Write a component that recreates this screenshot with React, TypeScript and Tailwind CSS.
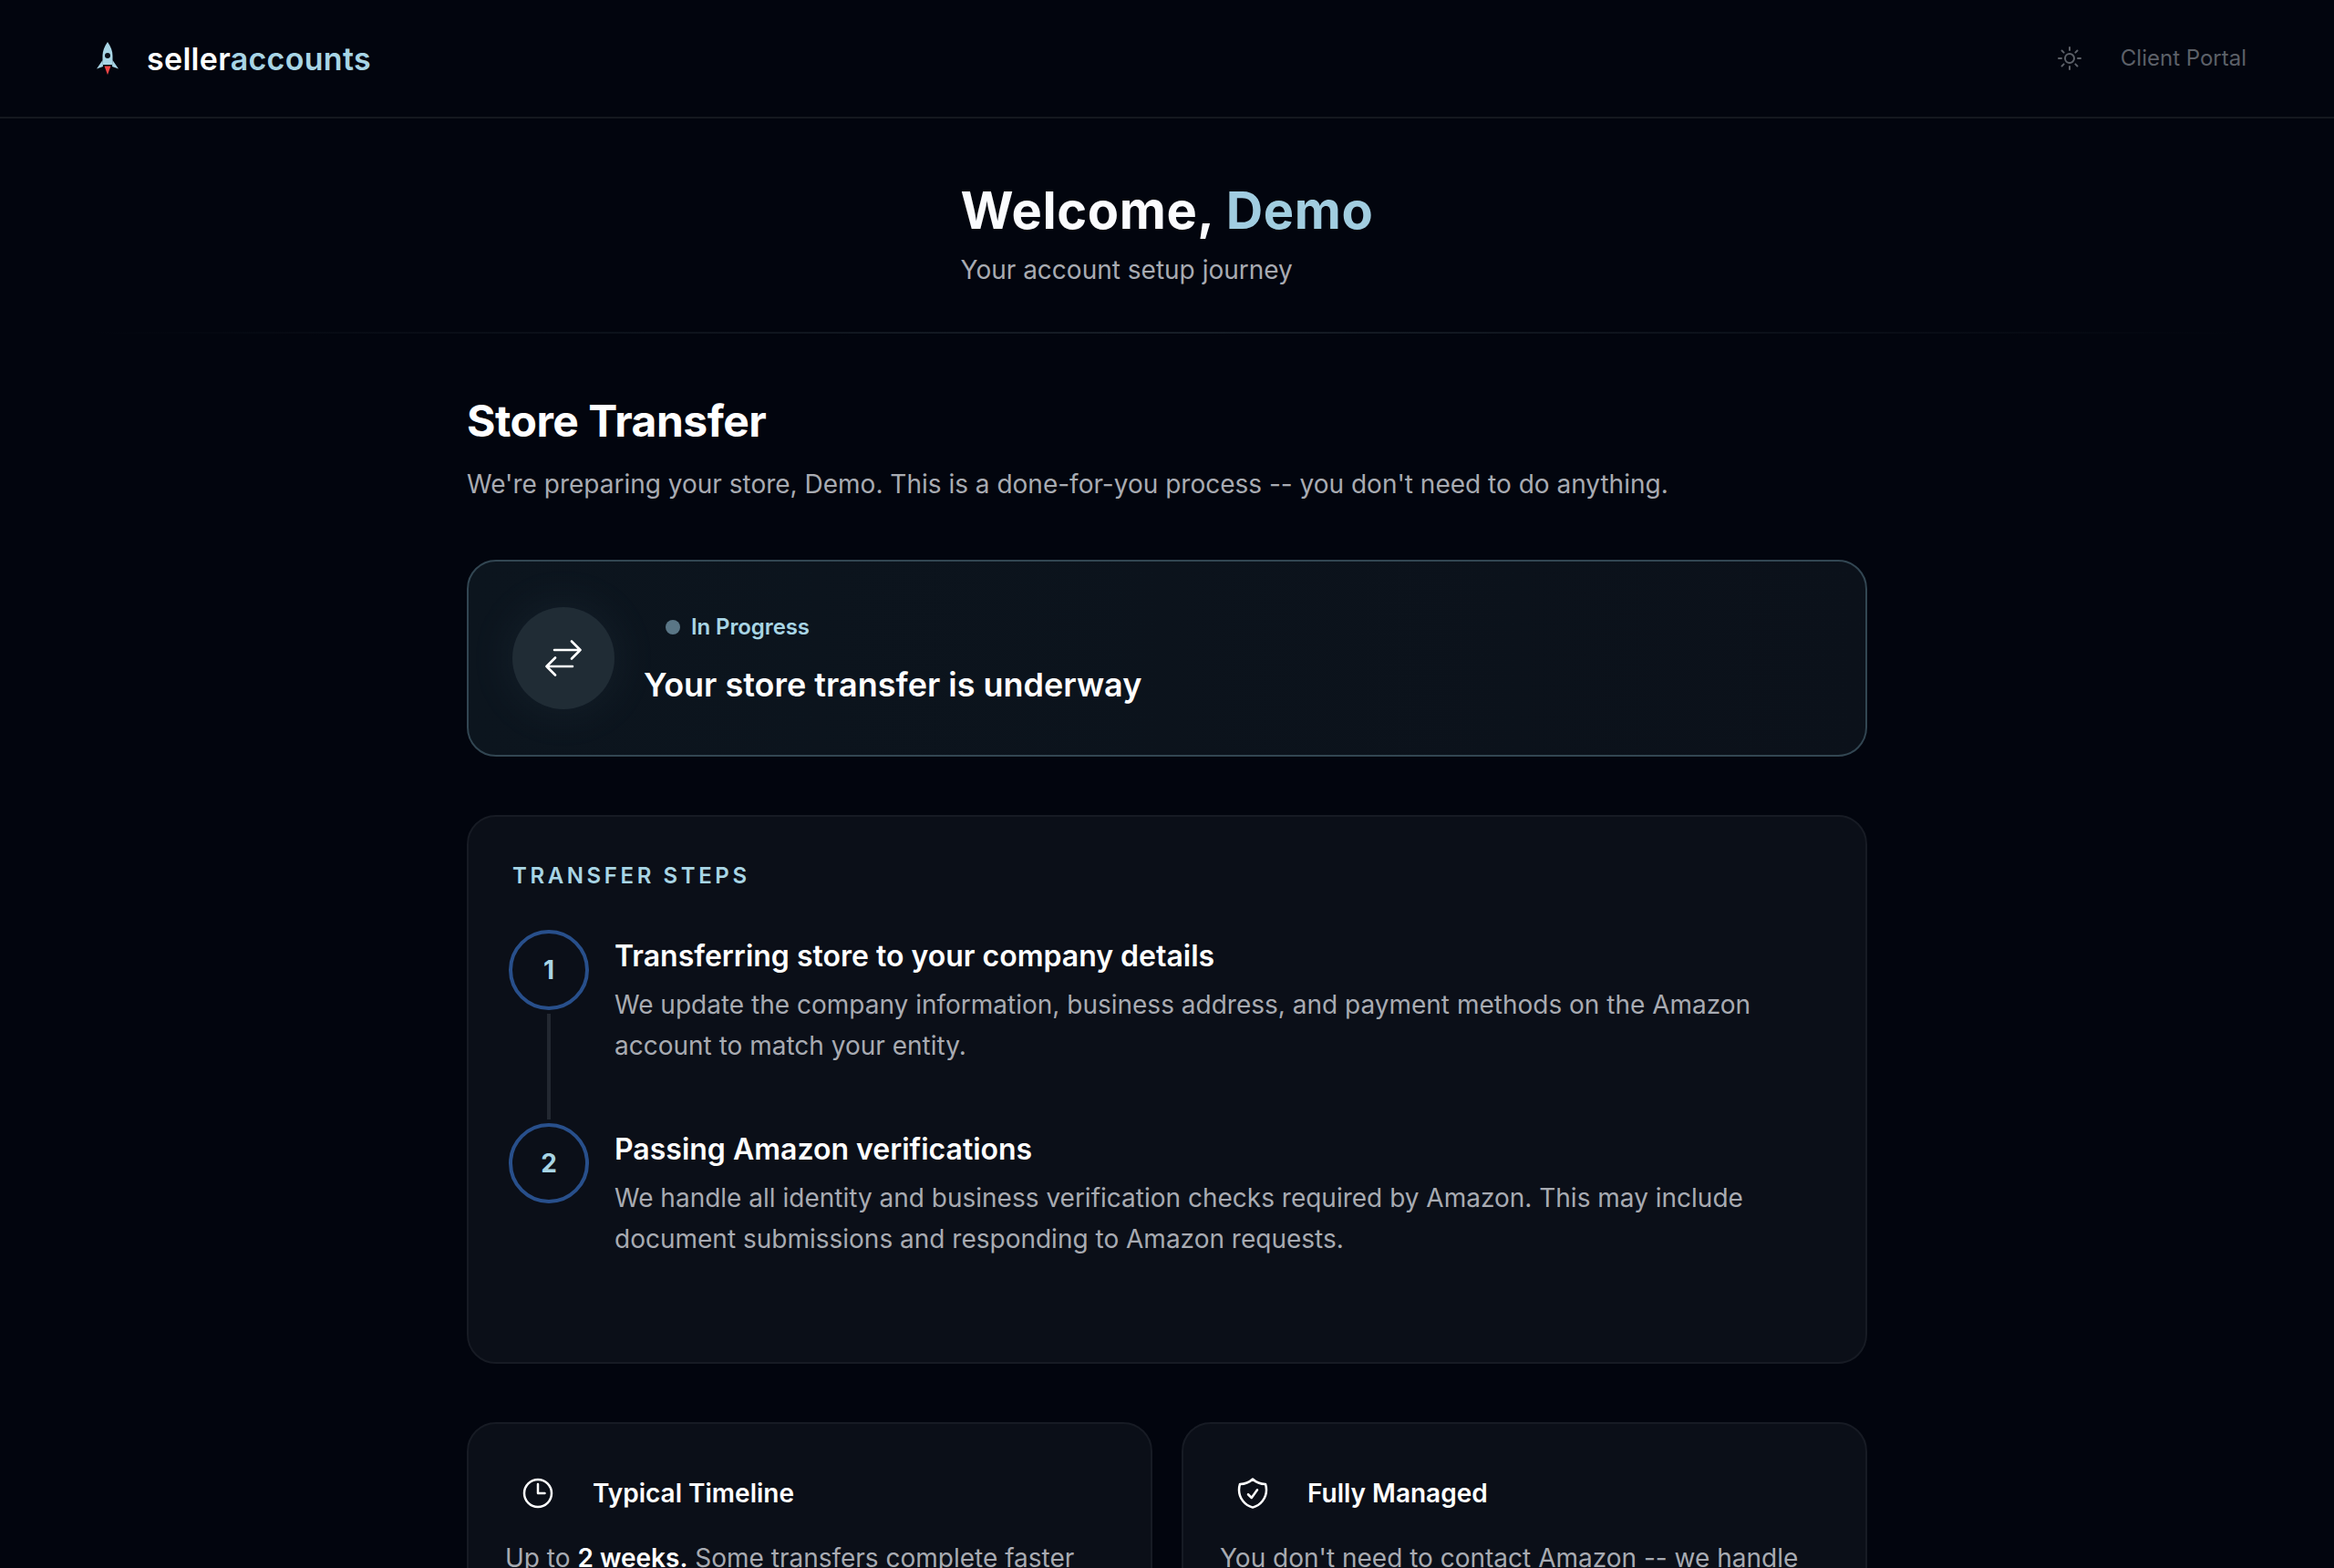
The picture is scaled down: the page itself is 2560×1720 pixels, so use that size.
import React from 'react';

const RocketLogo = () => (
  <svg width="26" height="36" viewBox="0 0 26 36" className="shrink-0">
    <path d="M13 0C9.5 5 7.5 10 7.5 15v10h11V15c0-5-2-10-5.500-15z" fill="#a8d5e5" />
    <path d="M7.500 20L1 29.500 8 27zM18.500 20L25 29.500 18 27z" fill="#a8d5e5" />
    <path d="M9.500 26.500h7L13 36z" fill="#ef4444" />
    <circle cx="13" cy="15" r="3" fill="#0a0f18" />
  </svg>
);

const Icon = ({ size, d }: { size: number; d: string }) => (
  <svg
    width={size}
    height={size}
    viewBox="0 0 24 24"
    fill="none"
    stroke="currentColor"
    strokeWidth={1.5}
    strokeLinecap="round"
    strokeLinejoin="round"
    className="shrink-0"
  >
    <path d={d} />
  </svg>
);

const sunPath =
  'M12 3v2.250m6.364.386-1.591 1.591M21 12h-2.250m-.386 6.364-1.591-1.591M12 18.750V21m-4.773-4.227-1.591 1.591M5.250 12H3m4.227-4.773L5.636 5.636M15.750 12a3.750 3.750 0 1 1-7.500 0 3.750 3.750 0 0 1 7.500 0Z';
const clockPath = 'M12 6v6h4.500m4.500 0a9 9 0 1 1-18 0 9 9 0 0 1 18 0Z';
const shieldPath =
  'M9 12.750 11.250 15 15 9.750m-3-7.036A11.959 11.959 0 0 1 3.598 6 11.990 11.990 0 0 0 3 9.749c0 5.592 3.824 10.290 9 11.623 5.176-1.332 9-6.030 9-11.622 0-1.310-.210-2.571-.598-3.751h-.152c-3.196 0-6.100-1.248-8.250-3.285Z';

const SwapIcon = () => (
  <svg width="40" height="40" viewBox="0 0 40 40" fill="none" stroke="currentColor" strokeWidth="2.600" strokeLinecap="round" strokeLinejoin="round">
    <path d="M10 11h28.500M29 1.500l9.500 9.500-9.500 9.500" />
    <path d="M30 29H1.500M11 19.500 1.500 29l9.500 9.500" />
  </svg>
);

const steps = [
  {
    n: '1',
    title: 'Transferring store to your company details',
    text: 'We update the company information, business address, and payment methods on the Amazon account to match your entity.',
  },
  {
    n: '2',
    title: 'Passing Amazon verifications',
    text: 'We handle all identity and business verification checks required by Amazon. This may include document submissions and responding to Amazon requests.',
  },
];

export default function App() {
  return (
    <div className="min-h-screen bg-[#02050e] font-['Inter',sans-serif] text-white">
      {/* Header */}
      <header className="flex h-[130px] items-center justify-between border-b-2 border-[#14181f] pr-[96px] pl-[105px]">
        <div className="flex items-center gap-[30px]">
          <RocketLogo />
          <span className="text-[34px] font-semibold tracking-[0.3px]">
            seller<span className="text-[#a8d5e5]">accounts</span>
          </span>
        </div>
        <div className="flex items-center gap-[40px] text-[#5c6068]">
          <Icon size={32} d={sunPath} />
          <span className="text-[24px]">Client Portal</span>
        </div>
      </header>

      {/* Welcome */}
      <section className="relative flex h-[236px] justify-center pt-[69px]">
        <div>
          <h1 className="text-[56px] leading-[64px] font-bold tracking-[0.6px] text-[#fafbfd]">
            Welcome, <span className="text-[#a1cde0]">Demo</span>
          </h1>
          <p className="mt-[13px] text-[28px] leading-[40px] text-[#a8abb2]">Your account setup journey</p>
        </div>
        <div className="absolute right-[96px] bottom-0 left-[96px] h-[2px] bg-gradient-to-r from-transparent via-[#171e27] to-transparent" />
      </section>

      <main className="mx-auto w-[1536px] pt-[66px] pb-[64px]">
        <h2 className="text-[48px] leading-[60px] font-bold tracking-[-0.5px]">Store Transfer</h2>
        <p className="mt-[17px] text-[28px] leading-[44px] text-[#a8abb2]">
          We're preparing your store, Demo. This is a done-for-you process -- you don't need to do anything.
        </p>

        {/* Status */}
        <div className="mt-[61px] flex h-[216px] items-center gap-[32px] rounded-[32px] border-2 border-[#324652] bg-gradient-to-r from-[#0c151e] to-[#0b111a] px-[48px]">
          <div className="flex h-[112px] w-[112px] shrink-0 items-center justify-center rounded-full bg-[#202c35] shadow-[0_0_60px_rgba(168,213,229,0.07)]">
            <SwapIcon />
          </div>
          <div>
            <div className="ml-[24px] flex items-center gap-[12px] text-[24px] leading-[36px] font-semibold tracking-[-0.1px] text-[#a8d5e5]">
              <span className="h-[16px] w-[16px] rounded-full bg-[#5a7686]" />
              In Progress
            </div>
            <div className="mt-[21px] text-[36px] leading-[48px] font-semibold">Your store transfer is underway</div>
          </div>
        </div>

        {/* Steps */}
        <div className="mt-[64px] h-[602px] rounded-[32px] border-2 border-[#171b24] bg-[#0b0f18] px-[48px] pt-[47px]">
          <div className="text-[24px] leading-[36px] font-semibold tracking-[3.6px] text-[#a8d5e5]">TRANSFER STEPS</div>
          <div className="mt-[41px] -ml-[4px]">
            {steps.map((s, i) => (
              <div key={s.n} className="flex gap-[28px]">
                <div className="flex w-[88px] shrink-0 flex-col items-center">
                  <div className="flex h-[88px] w-[88px] items-center justify-center rounded-full border-4 border-[#284f8b] text-[28px] font-bold text-[#a8d5e5]">
                    {s.n}
                  </div>
                  {i === 0 && <div className="mt-[4px] mb-[4px] h-[116px] w-[4px] bg-[#232831]" />}
                </div>
                <div className="w-[1270px]">
                  <div className="mt-[7px] text-[32px] leading-[44px] font-semibold">{s.title}</div>
                  <p className="mt-[9px] text-[28px] leading-[45px] text-[#a8abb2]">{s.text}</p>
                </div>
              </div>
            ))}
          </div>
        </div>

        {/* Info cards */}
        <div className="mt-[64px] grid grid-cols-2 gap-[32px]">
          <div className="rounded-[32px] border-2 border-[#171b24] bg-[#0b0f18] px-[40px] pt-[56px] pb-[40px]">
            <div className="flex items-center gap-[40px] pl-[16px]">
              <Icon size={40} d={clockPath} />
              <span className="text-[28px] leading-[36px] font-semibold">Typical Timeline</span>
            </div>
            <p className="mt-[29px] text-[28px] leading-[44px] text-[#a8abb2]">
              Up to <strong className="font-semibold text-white">2 weeks.</strong> Some transfers complete faster depending on Amazon's review times.
            </p>
          </div>
          <div className="rounded-[32px] border-2 border-[#171b24] bg-[#0b0f18] px-[40px] pt-[56px] pb-[40px]">
            <div className="flex items-center gap-[40px] pl-[16px]">
              <Icon size={40} d={shieldPath} />
              <span className="text-[28px] leading-[36px] font-semibold">Fully Managed</span>
            </div>
            <p className="mt-[29px] text-[28px] leading-[44px] text-[#a8abb2]">
              You don't need to contact Amazon -- we handle everything on your behalf.
            </p>
          </div>
        </div>
      </main>
    </div>
  );
}
